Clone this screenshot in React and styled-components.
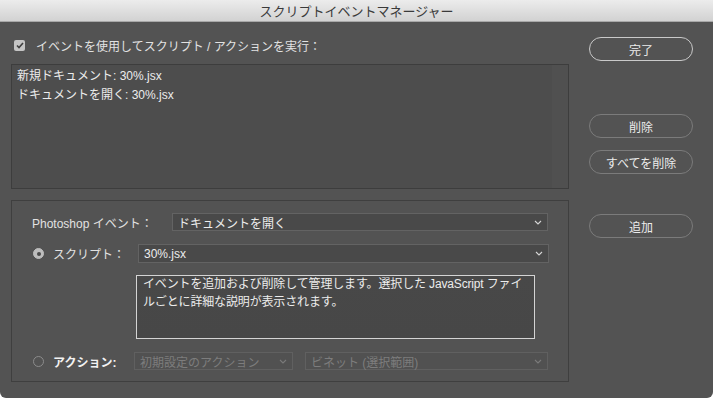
import React from "react";
import styled, { createGlobalStyle } from "styled-components";

const Global = createGlobalStyle`
  html, body {
    margin: 0;
    padding: 0;
    background: #ffffff;
  }
  body {
    font-family: "Liberation Sans", "Noto Sans CJK JP", sans-serif;
    font-size: 12px;
    -webkit-font-smoothing: antialiased;
  }
`;

const Chevron = ({ disabled }) => (
  <svg width="8" height="5" viewBox="0 0 8 5">
    <polyline
      points="1,1 4,4 7,1"
      fill="none"
      stroke={disabled ? "#7a7a7a" : "#d6d6d6"}
      strokeWidth="1.1"
    />
  </svg>
);

const Select = ({ children, width, height = 18, disabled }) => (
  <SelectBox $width={width} $height={height} $disabled={disabled}>
    <span>{children}</span>
    <Chevron disabled={disabled} />
  </SelectBox>
);

const App = () => {
  return (
    <Window>
      <Global />
      <TitleBar>スクリプトイベントマネージャー</TitleBar>
      <Body>
        <LeftColumn>
          <CheckRow>
            <CheckBox>
              <svg width="8" height="7" viewBox="0 0 8 7">
                <polyline points="1,3.5 3,5.5 7,1" fill="none" stroke="#3f3f3f" strokeWidth="1.6" />
              </svg>
            </CheckBox>
            <Label>イベントを使用してスクリプト / アクションを実行：</Label>
          </CheckRow>
          <ListBox>
            <ListItems>
              <ListItem>新規ドキュメント: 30%.jsx</ListItem>
              <ListItem>ドキュメントを開く: 30%.jsx</ListItem>
            </ListItems>
            <ScrollTrack />
          </ListBox>
          <GroupBox>
            <Row>
              <Label style={{ width: 140 }}>Photoshop イベント：</Label>
              <Select width={376}>ドキュメントを開く</Select>
            </Row>
            <Row $top={13}>
              <Radio $checked />
              <Label style={{ width: 85 }}>スクリプト：</Label>
              <Select width={411} height={19}>30%.jsx</Select>
            </Row>
            <TextArea>
              <TextBody>
                イベントを追加および削除して管理します。選択した JavaScript ファイルごとに詳細な説明が表示されます。
              </TextBody>
            </TextArea>
            <Row $top={13}>
              <Radio />
              <Label $bold style={{ width: 81 }}>アクション:</Label>
              <Select width={159} disabled>初期設定のアクション</Select>
              <Spacer />
              <Select width={243} disabled>ビネット (選択範囲)</Select>
            </Row>
          </GroupBox>
        </LeftColumn>
        <RightColumn>
          <Button $primary $top={1}>完了</Button>
          <Button $top={53}>削除</Button>
          <Button $top={12}>すべてを削除</Button>
          <Button $top={40}>追加</Button>
        </RightColumn>
      </Body>
    </Window>
  );
};

const Window = styled.div`
  width: 713px;
  height: 398px;
  background: #535353;
  border-radius: 0 0 6px 6px;
  overflow: hidden;
  display: flex;
  flex-direction: column;
`;

const TitleBar = styled.div`
  height: 21px;
  background: linear-gradient(#ececec, #d2d2d2);
  border-bottom: 1px solid #a8a8a8;
  color: #3a3a3a;
  font-size: 13px;
  font-family: "Noto Sans CJK JP", sans-serif;
  display: flex;
  align-items: center;
  justify-content: center;
`;

const Body = styled.div`
  flex: 1;
  display: flex;
  padding: 14px 0 0 11px;
  gap: 20px;
`;

const LeftColumn = styled.div`
  width: 558px;
  display: flex;
  flex-direction: column;
`;

const CheckRow = styled.div`
  height: 18px;
  display: flex;
  align-items: center;
  padding-left: 3px;
  gap: 11px;
`;

const CheckBox = styled.div`
  width: 11px;
  height: 11px;
  border-radius: 2px;
  background: #c4c4c4;
  display: flex;
  align-items: center;
  justify-content: center;
`;

const Label = styled.span`
  color: ${(p) => (p.$bold ? "#f2f2f2" : "#e2e2e2")};
  font-weight: ${(p) => (p.$bold ? "bold" : "normal")};
  font-size: 12px;
  white-space: nowrap;
  flex-shrink: 0;
`;

const ListBox = styled.div`
  margin-top: 10px;
  height: 125px;
  box-sizing: border-box;
  border: 1px solid #3d3d3d;
  background: #4d4d4d;
  display: flex;
`;

const ListItems = styled.div`
  flex: 1;
  padding: 2px 0 0 5px;
  display: flex;
  flex-direction: column;
`;

const ListItem = styled.div`
  color: #ececec;
  font-size: 12px;
  line-height: 19px;
`;

const ScrollTrack = styled.div`
  width: 16px;
  background: #505050;
`;

const GroupBox = styled.div`
  margin-top: 11px;
  height: 182px;
  box-sizing: border-box;
  border: 1px solid #3f3f3f;
  padding: 12px 20px 0 20px;
  display: flex;
  flex-direction: column;
`;

const Row = styled.div`
  display: flex;
  align-items: center;
  margin-top: ${(p) => p.$top || 0}px;
`;

const Radio = styled.div`
  width: 11px;
  height: 11px;
  border-radius: 50%;
  box-sizing: border-box;
  margin: 0 9px 0 1px;
  flex-shrink: 0;
  background: ${(p) => (p.$checked ? "#bdbdbd" : "transparent")};
  border: 1px solid ${(p) => (p.$checked ? "#bdbdbd" : "#8c8c8c")};
  display: flex;
  align-items: center;
  justify-content: center;
  &::after {
    content: "";
    width: 4px;
    height: 4px;
    border-radius: 50%;
    background: ${(p) => (p.$checked ? "#4a4a4a" : "transparent")};
  }
`;

const SelectBox = styled.div`
  width: ${(p) => p.$width}px;
  height: ${(p) => p.$height}px;
  box-sizing: border-box;
  border: 1px solid ${(p) => (p.$disabled ? "#606060" : "#636363")};
  background: ${(p) => (p.$disabled ? "#515151" : "#494949")};
  color: ${(p) => (p.$disabled ? "#7d7d7d" : "#ededed")};
  font-size: 12px;
  display: flex;
  align-items: center;
  justify-content: space-between;
  padding: 0 5px 0 5px;
  flex-shrink: 0;
  span {
    white-space: nowrap;
  }
`;

const Spacer = styled.div`
  width: 13px;
`;

const TextArea = styled.div`
  margin: 12px 0 0 104px;
  width: 399px;
  height: 64px;
  box-sizing: border-box;
  border: 1px solid #d4d4d4;
  background: linear-gradient(#484848, #474747);
  padding: 0 2px 0 6px;
`;

const TextBody = styled.div`
  margin-top: -1px;
  color: #ececec;
  font-size: 12px;
  line-height: 18px;
  letter-spacing: -0.15px;
`;

const RightColumn = styled.div`
  width: 104px;
  display: flex;
  flex-direction: column;
`;

const Button = styled.div`
  margin-top: ${(p) => p.$top || 0}px;
  height: 24px;
  box-sizing: border-box;
  border-radius: 12px;
  border: ${(p) => (p.$primary ? "1.5px solid #c9c9c9" : "1px solid #7b7b7b")};
  color: #ececec;
  font-size: 12px;
  font-family: "Noto Sans CJK JP", sans-serif;
  display: flex;
  align-items: center;
  justify-content: center;
`;

export default App;
